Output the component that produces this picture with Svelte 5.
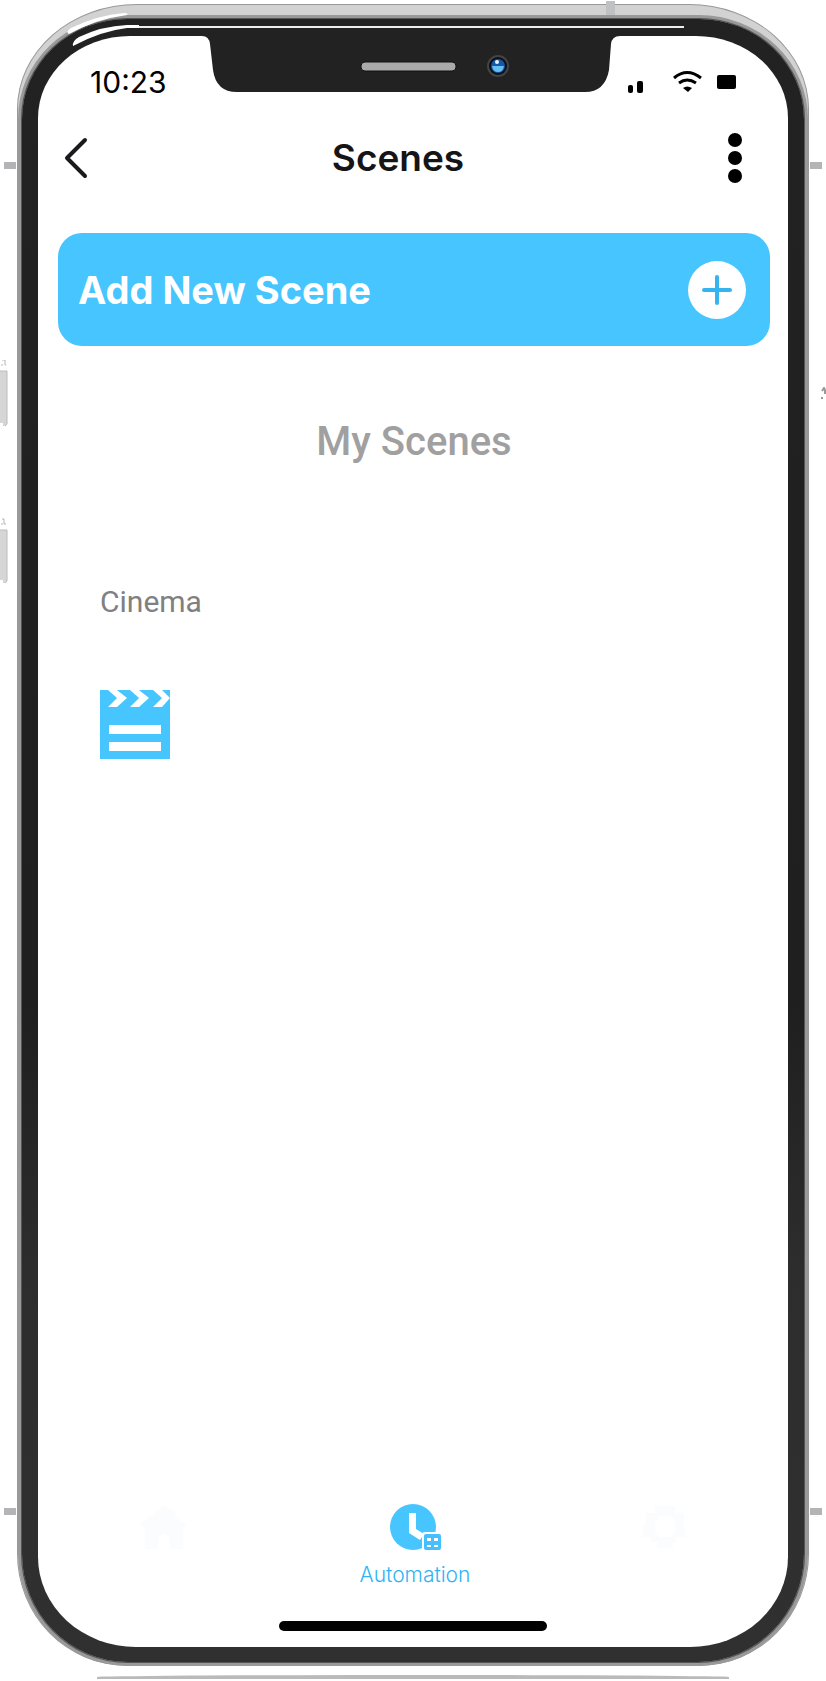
<script lang="ts">
    const title = "Scenes";
    const scenes = [{ name: "Cinema" }];
</script>

<div class="page">
    <div class="phone">
        <span class="antenna top"></span>
        <span class="antenna upper left"></span>
        <span class="antenna upper right"></span>
        <span class="antenna lower left"></span>
        <span class="antenna lower right"></span>
        <svg class="side-buttons" width="8" height="226" viewBox="0 0 8 226" aria-hidden="true">
            <path d="M2 0h3v5h1M1 5h2M2 159h2v5h2M1 164h2" fill="none" stroke="#b5b5b5" />
            <path d="M0 11h7v53l-2 2h-2v-3H0zM0 170h7v51l-2 2h-2v-3H0z" fill="#d6d6d6" />
            <path d="M0 11h7v53l-2 2M0 170h7v51l-2 2" fill="none" stroke="#bbb" />
        </svg>
        <svg class="power" width="6" height="12" viewBox="0 0 6 12" aria-hidden="true">
            <path d="M2 4l2-3 1 2v4M1 11h2" fill="none" stroke="#999" stroke-width="2" />
        </svg>

        <div class="bezel">
            <span class="shine"></span>
            <svg class="glint" width="120" height="50" viewBox="0 0 120 50" aria-hidden="true">
                <path d="M47 15q-4-2 2-6Q76-4 102-6q5 0 3 2Q74 0 47 15z" fill="#fff" />
                <path d="M51 27q-1-5 6-9Q80 7 105 6h12v3h-12Q79 12 51 27z" fill="#fff" />
            </svg>

            <div class="screen">
                <svg class="notch" width="418" height="56" viewBox="0 0 418 56" aria-hidden="true">
                    <path d="M0 0Q7 0 8 8l3 26q3 22 24 22h348q20 0 24-22l2-26q1-8 9-8z" fill="#222" />
                    <rect x="159" y="26" width="95" height="9" rx="4" fill="#aaa" stroke="#111" />
                    <circle cx="296" cy="30" r="11" fill="#444" />
                    <circle cx="296" cy="30" r="9" fill="#0b0e16" />
                    <circle cx="296" cy="30" r="7" fill="#1558a8" />
                    <path d="M290 30h12q-1 6-6 6t-6-6z" fill="#65bdf0" />
                    <circle cx="295" cy="26" r="2" fill="#e4f5ff" />
                </svg>

                <div class="status">
                    <time>10:23</time>
                    <svg width="110" height="24" viewBox="0 0 110 24" aria-label="Signal, Wi-Fi, battery" role="img">
                        <rect x="0" y="15" width="5" height="8" rx="2" />
                        <rect x="9" y="11" width="6" height="12" rx="2" />
                        <path d="M46 8q13-11 27 0M51 13q8-6 17 0" fill="none" stroke="#000" stroke-width="3" />
                        <path d="M55 18q4-3 9 0l-4 4z" />
                        <rect x="89" y="5" width="19" height="14" rx="2" />
                    </svg>
                </div>

                <header>
                    <button class="icon-button" aria-label="Back">
                        <svg width="24" height="42" viewBox="0 0 24 42">
                            <path d="M21 3L3 21l18 18" fill="none" stroke="#1a1a1c" stroke-width="4" stroke-linecap="round" stroke-linejoin="round" />
                        </svg>
                    </button>
                    <h1>{title}</h1>
                    <button class="icon-button more" aria-label="More options">
                        <svg width="14" height="50" viewBox="0 0 14 50">
                            <circle cx="7" cy="7" r="7" />
                            <circle cx="7" cy="25" r="7" />
                            <circle cx="7" cy="43" r="7" />
                        </svg>
                    </button>
                </header>

                <main>
                    <button class="add">
                        <span>Add New Scene</span>
                        <svg width="58" height="58" viewBox="0 0 58 58" aria-hidden="true">
                            <circle cx="29" cy="29" r="29" fill="#fff" />
                            <path d="M29 16v26M16 29h26" stroke="#35b5ef" stroke-width="4" stroke-linecap="round" />
                        </svg>
                    </button>

                    <h2>My Scenes</h2>

                    <div class="scenes">
                        {#each scenes as scene}
                            <button class="scene">
                                <span>{scene.name}</span>
                                <svg width="70" height="69" viewBox="0 0 70 69" aria-hidden="true">
                                    <path d="M0 0h70v69H0z" fill="#46c5ff" />
                                    <path d="M8 0h9l10 8-10 9H8l9-9zM30 0h9l10 8-10 9h-9l9-9zM53 0h9l8 8-8 9h-9l9-9z" fill="#fff" />
                                    <path d="M9 35h52v9H9zM9 52h52v9H9z" fill="#fff" />
                                </svg>
                            </button>
                        {/each}
                    </div>
                </main>

                <nav>
                    <a class="tab" href="#home" aria-label="Home">
                        <svg width="50" height="46" viewBox="0 0 50 46">
                            <path d="M25 2l8 4 4 1v6l12 8-4 3v21H32V34q-6-8-12 0v11H7V24l-5-3z" fill="#fbfcfe" />
                        </svg>
                    </a>
                    <a class="tab active" href="#automation" aria-current="page">
                        <svg width="52" height="47" viewBox="0 0 52 47" aria-hidden="true">
                            <circle cx="24" cy="23" r="23" fill="#46c5ff" />
                            <path d="M20 9h7v16l8 5-4 6-11-7z" fill="#fff" />
                            <rect x="33" y="28" width="21" height="20" rx="3" fill="#fff" />
                            <rect x="35" y="30" width="17" height="16" rx="2" fill="#46bfff" />
                            <path d="M38 34h4v3h-4zM45 34h4v3h-4zM38 41h4v2h-4zM45 41h4v2h-4z" fill="#fff" />
                        </svg>
                        <span>Automation</span>
                    </a>
                    <a class="tab" href="#settings" aria-label="Settings">
                        <svg width="46" height="46" viewBox="0 0 46 46">
                            <path d="M13 2h20v7h9v10l1 5v9h-9v5h-3v6H15v-6H9v-5H1V23l3-4V9h9zM17 12l-4 6v10l4 5h13l3-5V18l-3-6z" fill="#fbfcfe" fill-rule="evenodd" />
                        </svg>
                    </a>
                </nav>
                <div class="home-bar"></div>
            </div>
        </div>
    </div>
    <div class="ledge"></div>
</div>

<style>
    :global(body) {
        margin: 0;
        background: #fff;
    }

    .page {
        box-sizing: border-box;
        min-height: 100vh;
        padding: 4px 17px 2px;
        display: flex;
        flex-direction: column;
        font-family: Inter, "Liberation Sans", sans-serif;
        overflow: hidden;
    }

    button {
        font: inherit;
        border: 0;
        padding: 0;
        background: none;
        cursor: pointer;
    }

    svg {
        display: block;
        flex: none;
    }

    /* metal frame */
    .phone {
        position: relative;
        flex: 1;
        display: flex;
        padding: 14px 4px 3px;
        border: 1px solid #999;
        border-radius: 120px 120px 110px 110px / 105px 105px 112px 112px;
        background: #d2d2d2;
    }

    .bezel {
        position: relative;
        flex: 1;
        display: flex;
        padding: 17px 16px 15px;
        border-radius: 105px 105px 106px 106px / 100px 100px 108px 108px;
        background: linear-gradient(#222 0%, #1f1f1f 60%, #2d2d2d 76%, #303030 100%);
        box-shadow: 0 0 0 1px #555, 0 0 0 4px #999;
    }

    .screen {
        position: relative;
        flex: 1;
        display: flex;
        flex-direction: column;
        background: #fff;
        border-radius: 92px 92px 98px 98px / 82px 82px 90px 90px;
    }

    .shine {
        position: absolute;
        top: 7px;
        left: 115px;
        right: 120px;
        height: 2px;
        background: #eee;
    }

    .glint {
        position: absolute;
        top: 0;
        left: 0;
        overflow: visible;
    }

    .notch {
        position: absolute;
        top: 0;
        left: calc(50% - 211px);
    }

    .antenna {
        position: absolute;
        width: 12px;
        height: 7px;
        background: #b4b4b6;
    }

    .antenna.left {
        left: -14px;
    }

    .antenna.right {
        right: -14px;
    }

    .antenna.upper {
        top: 157px;
    }

    .antenna.lower {
        bottom: 150px;
    }

    .antenna.top {
        top: -4px;
        right: 193px;
        width: 9px;
        height: 14px;
        background: #c0c1c4;
    }

    .side-buttons {
        position: absolute;
        top: 355px;
        left: -18px;
    }

    .power {
        position: absolute;
        top: 382px;
        right: -18px;
    }

    .status {
        display: flex;
        justify-content: space-between;
        align-items: center;
        height: 92px;
        padding: 0 50px 0 52px;
    }

    time {
        font-size: 30px;
        line-height: 32px;
        color: #000;
    }

    header {
        display: flex;
        justify-content: space-between;
        align-items: center;
        height: 60px;
        padding: 0 46px 0 26px;
    }

    .icon-button {
        display: flex;
    }

    .more {
        width: 34px;
        justify-content: flex-end;
    }

    h1,
    h2 {
        margin: 0;
        line-height: 48px;
    }

    h1 {
        font-size: 37px;
        font-weight: 600;
        color: #151517;
    }

    main {
        flex: 1;
        display: flex;
        flex-direction: column;
        padding: 45px 18px 0 20px;
    }

    .add {
        display: flex;
        justify-content: space-between;
        align-items: center;
        height: 113px;
        padding: 0 24px 0 20px;
        border-radius: 24px;
        background: #46c5ff;
        color: #fff;
        font-size: 38px;
        font-weight: 700;
    }

    h2 {
        margin-top: 72px;
        text-align: center;
        font-family: Roboto, sans-serif;
        font-size: 40px;
        font-weight: 500;
        color: #a0a0a0;
    }

    .scenes {
        display: flex;
        padding: 120px 42px 0;
    }

    .scene {
        display: flex;
        flex-direction: column;
        gap: 72px;
        font-family: Roboto, sans-serif;
        font-size: 30px;
        line-height: 32px;
        color: #808080;
    }

    nav {
        display: flex;
        justify-content: space-between;
        padding: 0 100px;
    }

    .tab {
        display: flex;
        flex-direction: column;
        align-items: center;
        gap: 12px;
        font-size: 21px;
        line-height: 24px;
        font-weight: 300;
        color: #2fb4f5;
        text-decoration: none;
    }

    .home-bar {
        width: 268px;
        height: 10px;
        margin: 34px auto 16px;
        border-radius: 5px;
        background: #000;
    }

    .ledge {
        height: 4px;
        margin: 9px 80px 0;
        background: #bababa;
        border-radius: 50% 50% 0 0 / 2px 2px 0 0;
    }
</style>
